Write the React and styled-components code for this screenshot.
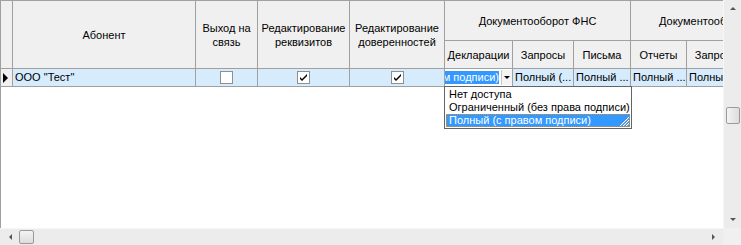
import React from "react";
import styled, { createGlobalStyle } from "styled-components";

const GlobalStyle = createGlobalStyle`
  html, body { margin: 0; padding: 0; background: #fff; }
  body { font-family: "Liberation Sans", Arial, sans-serif; font-size: 11px; color: #000; }
`;

const LINE = "#a0a0a0";
const ROWBG = "#d6ebfb";
const SEL = "#3399ff";

const widths = [12, 183, 62, 92, 95, 68, 61, 57, 56, 61, 57];
const template = widths.map((w) => `${w}px`).join(" ");

const Window = styled.div`
  width: 741px;
  height: 245px;
  display: grid;
  grid-template-columns: 1fr 18px;
  grid-template-rows: 1fr 17px;
  overflow: hidden;
  background: #fff;
`;

const Viewport = styled.div`
  position: relative;
  overflow: hidden;
  border-left: 1px solid ${LINE};
  border-top: 1px solid ${LINE};
  background: #fff;
`;

const Table = styled.div`
  display: grid;
  grid-template-columns: ${template};
  grid-template-rows: 40px 28px 18px;
  width: max-content;
`;

const HeadCell = styled.div`
  grid-column: ${(p) => p.$col};
  grid-row: ${(p) => p.$row};
  background: #f0f0f0;
  border-right: 1px solid ${LINE};
  border-bottom: 1px solid ${LINE};
  display: flex;
  align-items: center;
  justify-content: center;
  text-align: center;
  line-height: 14px;
  padding: 0 2px;
  white-space: ${(p) => (p.$nowrap ? "nowrap" : "normal")};
  overflow: hidden;
  box-sizing: border-box;
  font-size: 11px;
`;

const RowHead = styled.div`
  background: #f0f0f0;
  border-right: 1px solid ${LINE};
  border-bottom: 1px solid ${LINE};
  display: flex;
  align-items: center;
  padding-left: 2px;
  box-sizing: border-box;
`;

const Cell = styled.div`
  background: ${ROWBG};
  border-right: 1px solid ${LINE};
  border-bottom: 1px solid ${LINE};
  box-sizing: border-box;
  display: flex;
  align-items: center;
  justify-content: ${(p) => (p.$center ? "center" : "flex-start")};
  padding-left: ${(p) => (p.$center ? 0 : 2)}px;
  white-space: nowrap;
  overflow: hidden;
  font-size: 11px;
  line-height: 13px;
`;

const Check = styled.div`
  width: 11px;
  height: 11px;
  border: 1px solid #8f8f8f;
  background: #fff;
  display: flex;
  align-items: center;
  justify-content: center;
`;

const EditCell = styled.div`
  background: #fff;
  border-right: 1px solid ${LINE};
  border-bottom: 1px solid ${LINE};
  box-sizing: border-box;
  display: flex;
  align-items: stretch;
  overflow: hidden;
`;

const EditText = styled.div`
  flex: 1;
  display: flex;
  justify-content: flex-end;
  align-items: center;
  overflow: hidden;
  white-space: nowrap;
  padding-right: 2px;
`;

const Selected = styled.span`
  background: ${SEL};
  color: #fff;
  font-size: 11px;
  line-height: 13px;
  flex-shrink: 0;
`;

const DropButton = styled.div`
  width: 10px;
  margin: 1px 0;
  background: #f4f4f4;
  border-left: 1px solid #c8c8c8;
  display: flex;
  align-items: center;
  justify-content: center;
`;

const DropList = styled.div`
  position: absolute;
  left: 443px;
  top: 85px;
  width: 188px;
  box-sizing: border-box;
  border: 1px solid #646464;
  background: #fff;
  padding: 1px;
  display: flex;
  flex-direction: column;
`;

const Item = styled.div`
  position: relative;
  height: 13px;
  line-height: 13px;
  padding-left: 3px;
  font-size: 11px;
  white-space: nowrap;
  box-sizing: border-box;
  background: ${(p) => (p.$sel ? SEL : "transparent")};
  color: ${(p) => (p.$sel ? "#fff" : "#000")};
  outline: ${(p) => (p.$sel ? "1px dotted #e08a20" : "none")};
  outline-offset: -1px;
`;

const Grip = styled.svg`
  position: absolute;
  right: 0;
  bottom: 0;
`;

const VScroll = styled.div`
  background: #ececec;
  border-left: 1px solid #f6f6f6;
  display: flex;
  flex-direction: column;
  align-items: center;
  padding: 0 1px;
`;

const HScroll = styled.div`
  background: #ececec;
  border-top: 1px solid #f6f6f6;
  display: flex;
  align-items: center;
  padding: 0 1px;
`;

const Corner = styled.div`
  background: #f0f0f0;
`;

const ArrowBox = styled.div`
  width: ${(p) => (p.$h ? 18 : 16)}px;
  height: ${(p) => (p.$h ? 15 : 17)}px;
  display: flex;
  align-items: center;
  justify-content: center;
  flex-shrink: 0;
`;

const Thumb = styled.div`
  width: ${(p) => (p.$h ? 15 : 14)}px;
  height: ${(p) => (p.$h ? 14 : 17)}px;
  border: 1px solid #9a9a9a;
  border-radius: 2px;
  box-sizing: border-box;
  background: linear-gradient(${(p) => (p.$h ? "180deg" : "90deg")}, #f4f4f4, #dcdcdc);
  flex-shrink: 0;
`;

const Spacer = styled.div`
  flex: ${(p) => p.$grow || 1};
`;

const Tri = ({ dir, color = "#555", size = 4 }) => {
  const s = size;
  const pts = {
    up: `0,${s} ${s * 2},${s} ${s},0`,
    down: `0,0 ${s * 2},0 ${s},${s}`,
    left: `${s},0 ${s},${s * 2} 0,${s}`,
    right: `0,0 0,${s * 2} ${s},${s}`,
  }[dir];
  const w = dir === "up" || dir === "down" ? s * 2 : s;
  const h = dir === "up" || dir === "down" ? s : s * 2;
  return (
    <svg width={w} height={h} viewBox={`0 0 ${w} ${h}`}>
      <polygon points={pts} fill={color} />
    </svg>
  );
};

const CheckMark = () => (
  <svg width="9" height="9" viewBox="0 0 9 9">
    <path d="M1 4 L3 6 L8 1 L8 3 L3 8 L1 6 Z" fill="#000" />
  </svg>
);

const Checkbox = ({ checked }) => <Check>{checked && <CheckMark />}</Check>;

const singleHeaders = [
  { col: 2, text: "Абонент" },
  { col: 3, text: "Выход на связь" },
  { col: 4, text: "Редактирование реквизитов" },
  { col: 5, text: "Редактирование доверенностей" },
];

const subHeaders = [
  { col: 6, text: "Декларации" },
  { col: 7, text: "Запросы" },
  { col: 8, text: "Письма" },
  { col: 9, text: "Отчеты" },
  { col: 10, text: "Запросы" },
  { col: 11, text: "Письма" },
];

const options = [
  "Нет доступа",
  "Ограниченный (без права подписи)",
  "Полный (с правом подписи)",
];

export default function App() {
  return (
    <>
      <GlobalStyle />
      <Window>
        <Viewport>
          <Table>
            <HeadCell $col="1" $row="1 / span 2" />
            {singleHeaders.map((h) => (
              <HeadCell key={h.col} $col={h.col} $row="1 / span 2">
                {h.text}
              </HeadCell>
            ))}
            <HeadCell $col="6 / span 3" $row="1" $nowrap>
              Документооборот ФНС
            </HeadCell>
            <HeadCell $col="9 / span 3" $row="1" $nowrap>
              Документооборот ПФР
            </HeadCell>
            {subHeaders.map((h) => (
              <HeadCell key={h.col} $col={h.col} $row="2" $nowrap>
                {h.text}
              </HeadCell>
            ))}
            <RowHead>
              <Tri dir="right" color="#000" size={5} />
            </RowHead>
            <Cell>ООО "Тест"</Cell>
            <Cell $center>
              <Checkbox />
            </Cell>
            <Cell $center>
              <Checkbox checked />
            </Cell>
            <Cell $center>
              <Checkbox checked />
            </Cell>
            <EditCell>
              <EditText>
                <Selected>Полный (с правом подписи)</Selected>
              </EditText>
              <DropButton>
                <Tri dir="down" color="#000" size={3} />
              </DropButton>
            </EditCell>
            <Cell>Полный (...</Cell>
            <Cell>Полный ...</Cell>
            <Cell>Полный ...</Cell>
            <Cell>Полный (...</Cell>
            <Cell>Полный ...</Cell>
          </Table>
          <DropList>
            {options.map((o, i) => (
              <Item key={o} $sel={i === 2}>
                {o}
                {i === 2 && (
                  <Grip width="12" height="12" viewBox="0 0 12 12">
                    <g stroke="#fff" strokeWidth="1">
                      <line x1="11" y1="2" x2="2" y2="11" />
                      <line x1="11" y1="5" x2="5" y2="11" />
                      <line x1="11" y1="8" x2="8" y2="11" />
                    </g>
                    <g stroke="#a0a0a0" strokeWidth="1">
                      <line x1="11" y1="3" x2="3" y2="11" />
                      <line x1="11" y1="6" x2="6" y2="11" />
                      <line x1="11" y1="9" x2="9" y2="11" />
                    </g>
                  </Grip>
                )}
              </Item>
            ))}
          </DropList>
        </Viewport>
        <VScroll>
          <ArrowBox>
            <Tri dir="up" size={3} />
          </ArrowBox>
          <Spacer $grow={90} />
          <Thumb />
          <Spacer $grow={88} />
          <ArrowBox>
            <Tri dir="down" size={3} />
          </ArrowBox>
        </VScroll>
        <HScroll>
          <ArrowBox $h>
            <Tri dir="left" size={3} />
          </ArrowBox>
          <Thumb $h />
          <Spacer />
          <ArrowBox $h>
            <Tri dir="right" size={3} />
          </ArrowBox>
        </HScroll>
        <Corner />
      </Window>
    </>
  );
}
